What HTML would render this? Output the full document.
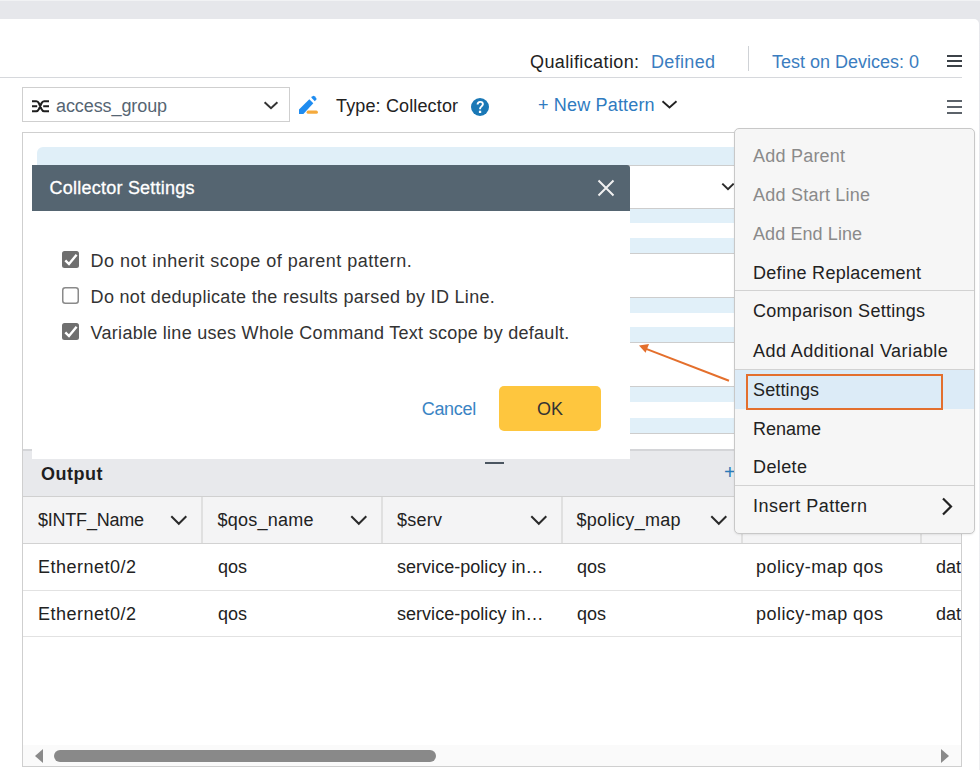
<!DOCTYPE html>
<html><head><meta charset="utf-8"><style>
html,body{margin:0;padding:0;width:980px;height:770px;overflow:hidden;background:#fff;}
body{position:relative;font-family:"Liberation Sans",sans-serif;}
.t{position:absolute;white-space:pre;}
.r{position:absolute;}
</style></head><body>
<div class="r" style="left:0px;top:0px;width:980px;height:19px;background:#e6e7eb;"></div>
<div class="r" style="left:0px;top:0px;width:980px;height:1px;background:#f1f2f4;"></div>
<div class="r" style="left:979px;top:19px;width:1px;height:751px;background:linear-gradient(#e6e7eb,#eff0f2);"></div>
<div class="r" style="left:974px;top:19px;width:5px;height:5px;background:#e6e7eb;"></div>
<div class="r" style="left:969px;top:19px;width:10px;height:10px;background:#fff;border-top-right-radius:5px;"></div>
<div class="t" style="left:530.00px;top:52.76px;font-size:18px;line-height:18px;letter-spacing:0.385px;color:#222;">Qualification:</div>
<div class="t" style="left:651.00px;top:52.76px;font-size:18px;line-height:18px;letter-spacing:0.333px;color:#3b7dc0;">Defined</div>
<div class="r" style="left:748px;top:46px;width:1px;height:25px;background:#cfd2d6;"></div>
<div class="t" style="left:772.00px;top:52.76px;font-size:18px;line-height:18px;letter-spacing:0.000px;color:#3b7dc0;">Test on Devices: 0</div>
<div class="r" style="left:947px;top:55px;width:15px;height:2px;background:#3c4248;"></div>
<div class="r" style="left:947px;top:60px;width:15px;height:2px;background:#3c4248;"></div>
<div class="r" style="left:947px;top:65px;width:15px;height:2px;background:#3c4248;"></div>
<div class="r" style="left:0px;top:77px;width:962px;height:1px;background:#d6d8dc;"></div>
<div class="r" style="left:22px;top:87px;width:268px;height:35px;background:#fff;border:1px solid #cfcfcf;box-sizing:border-box;"></div>
<svg class="r" style="left:31px;top:100px" width="19" height="13" viewBox="0 0 19 13"><path d="M1 1.2H5.3C6.6 1.2 7.3 2 7.9 3.3L10.5 9.1C11.1 10.4 11.8 11.2 13.1 11.2H18M1 11.2H5.3C6.6 11.2 7.3 10.4 7.9 9.1L10.5 3.3C11.1 2 11.8 1.2 13.1 1.2H18M1 6.2H6.2M12.2 6.2H18" fill="none" stroke="#1e1e1e" stroke-width="2.1"/></svg>
<div class="t" style="left:56.00px;top:97.26px;font-size:18px;line-height:18px;letter-spacing:-0.091px;color:#566573;">access_group</div>
<svg class="r" style="left:263px;top:100px" width="16" height="10" viewBox="0 0 16 10"><path d="M1.6 2.2L8 8.2L14.4 2.2" fill="none" stroke="#333" stroke-width="2"/></svg>
<svg class="r" style="left:292px;top:90px" width="30" height="30" viewBox="0 0 30 30"><path d="M7 24V19.6L17.3 9.3L21.3 13.3L11.4 24Z" fill="#1f8cf0"/><path d="M19.2 7.5L20.6 6.2Q21.6 5.4 22.5 6.2L24.2 7.9Q25 8.9 24.2 9.8L22.8 11.2Z" fill="#1f8cf0"/><rect x="14.6" y="20.6" width="11.3" height="3.2" rx="1.6" fill="#f5aa3c"/></svg>
<div class="t" style="left:336.00px;top:96.76px;font-size:18px;line-height:18px;letter-spacing:0.143px;color:#222;">Type: Collector</div>
<svg class="r" style="left:465px;top:94px" width="30" height="28" viewBox="0 0 30 28"><circle cx="15" cy="13" r="9" fill="#1a78b6"/><path d="M12.6 10.6C12.6 8.8 13.7 7.9 15.3 7.9C16.9 7.9 17.9 8.9 17.9 10.3C17.9 12 15.6 12.6 15.1 14.4V15.3" fill="none" stroke="#fff" stroke-width="1.9"/><rect x="13.9" y="16.7" width="2.3" height="2.3" fill="#fff"/></svg>
<div class="t" style="left:538.00px;top:96.36px;font-size:18px;line-height:18px;letter-spacing:0.167px;color:#2f7bbf;">+ New Pattern</div>
<svg class="r" style="left:661px;top:99px" width="17" height="11" viewBox="0 0 17 11"><path d="M1.5 2.3L8.5 8.4L15.5 2.3" fill="none" stroke="#222" stroke-width="1.9"/></svg>
<div class="r" style="left:947px;top:100px;width:15px;height:2px;background:#5c636a;"></div>
<div class="r" style="left:947px;top:106px;width:15px;height:2px;background:#5c636a;"></div>
<div class="r" style="left:947px;top:112px;width:15px;height:2px;background:#5c636a;"></div>
<div class="r" style="left:22px;top:132px;width:940px;height:635px;background:#fff;border:1px solid #cfcfcf;box-sizing:border-box;"></div>
<div class="r" style="left:37px;top:147px;width:900px;height:18px;background:#e0eff8;border-radius:6px 6px 0 0;"></div>
<div class="r" style="left:37px;top:165px;width:697px;height:1px;background:#cdcdcd;"></div>
<svg class="r" style="left:721px;top:182px" width="14" height="9" viewBox="0 0 14 9"><path d="M1.3 1.6L7 7.2L12.7 1.6" fill="none" stroke="#2a2a2a" stroke-width="2"/></svg>
<div class="r" style="left:37px;top:208px;width:697px;height:1px;background:#cdcdcd;"></div>
<div class="r" style="left:37px;top:209px;width:697px;height:14px;background:#e1f0f9;"></div>
<div class="r" style="left:37px;top:238px;width:697px;height:15px;background:#e1f0f9;"></div>
<div class="r" style="left:37px;top:253px;width:697px;height:1px;background:#cdcdcd;"></div>
<div class="r" style="left:37px;top:297px;width:697px;height:1px;background:#cdcdcd;"></div>
<div class="r" style="left:37px;top:298px;width:697px;height:15px;background:#e1f0f9;"></div>
<div class="r" style="left:37px;top:327px;width:697px;height:15px;background:#e1f0f9;"></div>
<div class="r" style="left:37px;top:342px;width:697px;height:1px;background:#cdcdcd;"></div>
<div class="r" style="left:37px;top:386px;width:697px;height:1px;background:#cdcdcd;"></div>
<div class="r" style="left:37px;top:387px;width:697px;height:15px;background:#e1f0f9;"></div>
<div class="r" style="left:37px;top:418px;width:697px;height:15px;background:#e1f0f9;"></div>
<div class="r" style="left:37px;top:433px;width:697px;height:1px;background:#cdcdcd;"></div>
<div class="r" style="left:23px;top:449px;width:938px;height:2px;background:#d4d5d8;"></div>
<div class="r" style="left:23px;top:451px;width:938px;height:45px;background:#e8e9ec;"></div>
<div class="r" style="left:23px;top:496px;width:938px;height:1px;background:#d0d0d0;"></div>
<div class="t" style="left:41.00px;top:464.76px;font-size:18px;line-height:18px;letter-spacing:0.500px;color:#1e1e1e;font-weight:bold;">Output</div>
<div class="r" style="left:485px;top:462px;width:19px;height:2px;background:#4a5560;"></div>
<div class="t" style="left:724px;top:462px;font-size:20px;line-height:20px;color:#2a7ab8">+</div>
<div class="r" style="left:23px;top:497px;width:938px;height:46px;background:#f4f4f5;"></div>
<div class="r" style="left:23px;top:543px;width:938px;height:1px;background:#d2d2d2;"></div>
<div class="r" style="left:201px;top:497px;width:2px;height:46px;background:#e0e0e0;"></div>
<div class="r" style="left:381px;top:497px;width:2px;height:46px;background:#e0e0e0;"></div>
<div class="r" style="left:561px;top:497px;width:2px;height:46px;background:#e0e0e0;"></div>
<div class="r" style="left:741px;top:497px;width:2px;height:46px;background:#e0e0e0;"></div>
<div class="r" style="left:920px;top:497px;width:2px;height:46px;background:#e0e0e0;"></div>
<div class="t" style="left:38.00px;top:510.76px;font-size:18px;line-height:18px;letter-spacing:-0.222px;color:#222;">$INTF_Name</div>
<div class="t" style="left:217.50px;top:510.76px;font-size:18px;line-height:18px;letter-spacing:0.250px;color:#222;">$qos_name</div>
<div class="t" style="left:397.00px;top:510.76px;font-size:18px;line-height:18px;letter-spacing:0.250px;color:#222;">$serv</div>
<div class="t" style="left:576.50px;top:510.76px;font-size:18px;line-height:18px;letter-spacing:0.300px;color:#222;">$policy_map</div>
<svg class="r" style="left:170px;top:515px" width="18" height="11" viewBox="0 0 18 11"><path d="M1.3 1.3L8.8 8.8L16.3 1.3" fill="none" stroke="#2a2a2a" stroke-width="2"/></svg>
<svg class="r" style="left:350px;top:515px" width="18" height="11" viewBox="0 0 18 11"><path d="M1.3 1.3L8.8 8.8L16.3 1.3" fill="none" stroke="#2a2a2a" stroke-width="2"/></svg>
<svg class="r" style="left:530px;top:515px" width="18" height="11" viewBox="0 0 18 11"><path d="M1.3 1.3L8.8 8.8L16.3 1.3" fill="none" stroke="#2a2a2a" stroke-width="2"/></svg>
<svg class="r" style="left:710px;top:515px" width="18" height="11" viewBox="0 0 18 11"><path d="M1.3 1.3L8.8 8.8L16.3 1.3" fill="none" stroke="#2a2a2a" stroke-width="2"/></svg>
<div class="t" style="left:38.00px;top:558.06px;font-size:18px;line-height:18px;letter-spacing:0.500px;color:#222;">Ethernet0/2</div>
<div class="t" style="left:218.00px;top:558.06px;font-size:18px;line-height:18px;letter-spacing:0.000px;color:#222;">qos</div>
<div class="t" style="left:397.00px;top:558.06px;font-size:18px;line-height:18px;letter-spacing:0.029px;color:#222;">service-policy in…</div>
<div class="t" style="left:577.00px;top:558.06px;font-size:18px;line-height:18px;letter-spacing:0.000px;color:#222;">qos</div>
<div class="t" style="left:756.00px;top:558.06px;font-size:18px;line-height:18px;letter-spacing:0.462px;color:#222;">policy-map qos</div>
<div class="t" style="left:936.00px;top:558.06px;font-size:18px;line-height:18px;letter-spacing:0.000px;color:#222;">dat</div>
<div class="t" style="left:38.00px;top:604.96px;font-size:18px;line-height:18px;letter-spacing:0.500px;color:#222;">Ethernet0/2</div>
<div class="t" style="left:218.00px;top:604.96px;font-size:18px;line-height:18px;letter-spacing:0.000px;color:#222;">qos</div>
<div class="t" style="left:397.00px;top:604.96px;font-size:18px;line-height:18px;letter-spacing:0.029px;color:#222;">service-policy in…</div>
<div class="t" style="left:577.00px;top:604.96px;font-size:18px;line-height:18px;letter-spacing:0.000px;color:#222;">qos</div>
<div class="t" style="left:756.00px;top:604.96px;font-size:18px;line-height:18px;letter-spacing:0.462px;color:#222;">policy-map qos</div>
<div class="t" style="left:936.00px;top:604.96px;font-size:18px;line-height:18px;letter-spacing:0.000px;color:#222;">dat</div>
<div class="r" style="left:23px;top:590px;width:938px;height:1px;background:#e2e2e2;"></div>
<div class="r" style="left:23px;top:636px;width:938px;height:1px;background:#e2e2e2;"></div>
<div class="r" style="left:962px;top:497px;width:17px;height:270px;background:#fff;"></div>
<div class="r" style="left:961px;top:132px;width:1px;height:635px;background:#cfcfcf;"></div>
<div class="r" style="left:23px;top:745px;width:938px;height:21px;background:#fafafa;"></div>
<svg class="r" style="left:35px;top:749px" width="8" height="14" viewBox="0 0 8 14"><path d="M8 0V14L0 7Z" fill="#8a8a8a"/></svg>
<div class="r" style="left:54px;top:750px;width:382px;height:12px;background:#898989;border-radius:6px;"></div>
<svg class="r" style="left:941px;top:749px" width="8" height="14" viewBox="0 0 8 14"><path d="M0 0V14L8 7Z" fill="#8a8a8a"/></svg>
<div class="r" style="left:32px;top:165px;width:598px;height:46px;background:#556571;border-radius:0 3px 0 0;"></div>
<div class="t" style="left:49.50px;top:179.16px;font-size:18px;line-height:18px;letter-spacing:0.235px;color:#fff;font-weight:normal;-webkit-text-stroke:0.3px #fff;">Collector Settings</div>
<svg class="r" style="left:597px;top:179px" width="18" height="18" viewBox="0 0 18 18"><path d="M1.5 1.5L16.5 16.5M16.5 1.5L1.5 16.5" fill="none" stroke="#f0f0f0" stroke-width="2"/></svg>
<div class="r" style="left:32px;top:211px;width:598px;height:248px;background:#fff;"></div>
<svg class="r" style="left:62px;top:251px" width="17" height="17" viewBox="0 0 17 17"><rect x="0" y="0" width="17" height="17" rx="2.5" fill="#6f6f6f"/><path d="M3.3 9.3L7 13L14.6 3.8" fill="none" stroke="#fff" stroke-width="2.4"/></svg>
<svg class="r" style="left:62px;top:287px" width="17" height="17" viewBox="0 0 17 17"><rect x="0.75" y="0.75" width="15.5" height="15.5" rx="2.5" fill="#fff" stroke="#8a8a8a" stroke-width="1.5"/></svg>
<svg class="r" style="left:62px;top:323px" width="17" height="17" viewBox="0 0 17 17"><rect x="0" y="0" width="17" height="17" rx="2.5" fill="#6f6f6f"/><path d="M3.3 9.3L7 13L14.6 3.8" fill="none" stroke="#fff" stroke-width="2.4"/></svg>
<div class="t" style="left:90.60px;top:252.36px;font-size:18px;line-height:18px;letter-spacing:0.500px;color:#333;">Do not inherit scope of parent pattern.</div>
<div class="t" style="left:90.60px;top:288.36px;font-size:18px;line-height:18px;letter-spacing:0.312px;color:#333;">Do not deduplicate the results parsed by ID Line.</div>
<div class="t" style="left:90.60px;top:324.36px;font-size:18px;line-height:18px;letter-spacing:0.278px;color:#333;">Variable line uses Whole Command Text scope by default.</div>
<div class="t" style="left:421.70px;top:400.16px;font-size:18px;line-height:18px;letter-spacing:-0.300px;color:#3a84c4;">Cancel</div>
<div class="r" style="left:499px;top:386px;width:102px;height:45px;background:#fec63e;border-radius:5px;"></div>
<div class="t" style="left:537.00px;top:400.16px;font-size:18px;line-height:18px;letter-spacing:0.000px;color:#333;">OK</div>
<svg class="r" style="left:0;top:0" width="980" height="770" viewBox="0 0 980 770"><path d="M729 380.8L645.5 348.6" stroke="#e46f2c" stroke-width="2" fill="none"/><path d="M639 345.6L649 344L645.6 352.8Z" fill="#e46f2c"/></svg>
<div class="r" style="left:734px;top:128px;width:241px;height:406px;background:#f6f6f6;border:1px solid #c8c8c8;border-radius:5px;box-sizing:border-box;box-shadow:0 1px 2px rgba(0,0,0,0.08);"></div>
<div class="r" style="left:735px;top:290px;width:239px;height:1px;background:#d2d2d2;"></div>
<div class="r" style="left:735px;top:369px;width:239px;height:1px;background:#d2d2d2;"></div>
<div class="r" style="left:735px;top:370px;width:239px;height:39px;background:#dcebf7;"></div>
<div class="r" style="left:735px;top:485px;width:239px;height:1px;background:#d2d2d2;"></div>
<div class="r" style="left:746px;top:373.5px;width:197px;height:36px;background:transparent;border:2px solid #e36f2e;box-sizing:border-box;"></div>
<div class="t" style="left:753.00px;top:146.76px;font-size:18px;line-height:18px;letter-spacing:0.222px;color:#8a8a8a;">Add Parent</div>
<div class="t" style="left:753.00px;top:185.76px;font-size:18px;line-height:18px;letter-spacing:0.231px;color:#8a8a8a;">Add Start Line</div>
<div class="t" style="left:753.00px;top:224.76px;font-size:18px;line-height:18px;letter-spacing:0.091px;color:#8a8a8a;">Add End Line</div>
<div class="t" style="left:753.00px;top:263.86px;font-size:18px;line-height:18px;letter-spacing:0.294px;color:#222;">Define Replacement</div>
<div class="t" style="left:753.00px;top:302.26px;font-size:18px;line-height:18px;letter-spacing:0.278px;color:#222;">Comparison Settings</div>
<div class="t" style="left:753.00px;top:341.76px;font-size:18px;line-height:18px;letter-spacing:0.455px;color:#222;">Add Additional Variable</div>
<div class="t" style="left:753.00px;top:380.76px;font-size:18px;line-height:18px;letter-spacing:0.143px;color:#222;">Settings</div>
<div class="t" style="left:753.00px;top:419.66px;font-size:18px;line-height:18px;letter-spacing:0.000px;color:#222;">Rename</div>
<div class="t" style="left:753.00px;top:458.16px;font-size:18px;line-height:18px;letter-spacing:0.400px;color:#222;">Delete</div>
<div class="t" style="left:753.00px;top:497.06px;font-size:18px;line-height:18px;letter-spacing:0.462px;color:#222;">Insert Pattern</div>
<svg class="r" style="left:941px;top:497px" width="13" height="19" viewBox="0 0 13 19"><path d="M2 1.5L10 9.5L2 17.5" fill="none" stroke="#222" stroke-width="2.2"/></svg>
</body></html>
